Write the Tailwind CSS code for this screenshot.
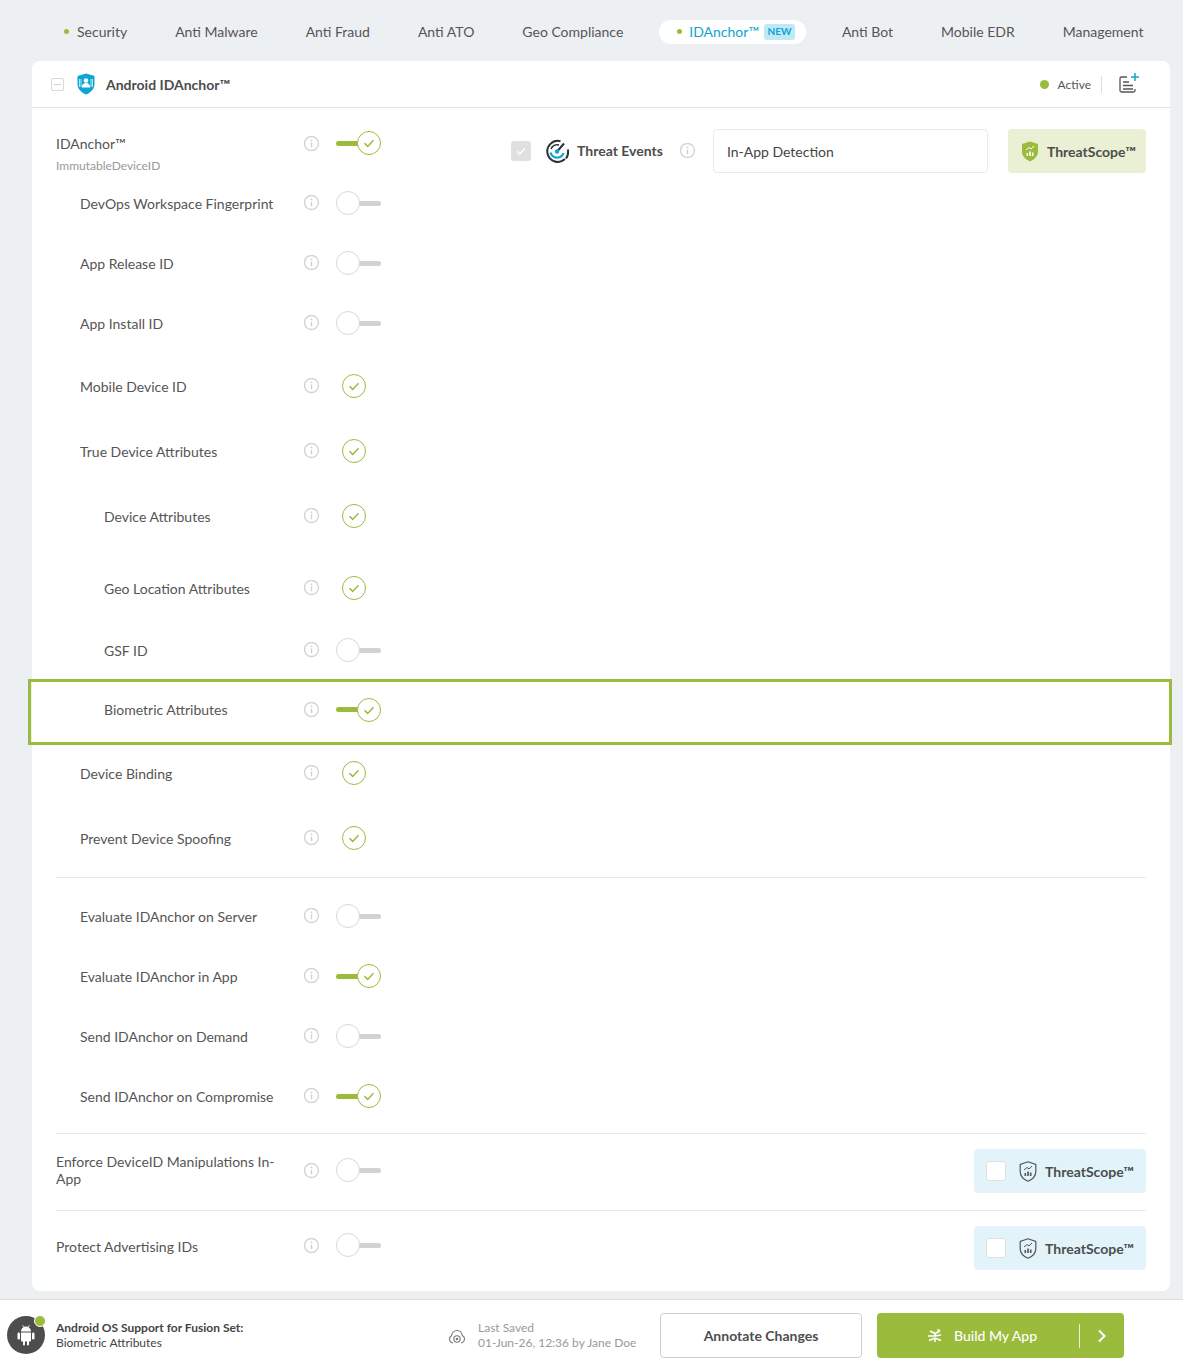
<!DOCTYPE html>
<html lang="en">
<head>
    <meta charset="UTF-8">
    <title>Android IDAnchor</title>
    <script src="https://cdn.jsdelivr.net/npm/@tailwindcss/browser@4"></script>
</head>
<body class="bg-[#edf0f3] font-['Lato',sans-serif] text-[14px] text-[#555]">
    <!-- shared icons -->
    <svg class="hidden">
        <symbol id="info" viewBox="0.5 0.5 16 16">
            <circle cx="8" cy="8" r="7" fill="none" stroke="#d4d4d4" stroke-width="1.4"/>
            <circle cx="8" cy="4.8" r="0.9" fill="#cfcfcf"/>
            <path d="M8 7v4.8" stroke="#cfcfcf" stroke-width="1.4" fill="none"/>
        </symbol>
        <symbol id="check" viewBox="0 0 24 24">
            <circle cx="12" cy="12" r="11.5" fill="#fff" stroke="#9bbb3c"/>
            <path d="M7.5 12.2l3.2 3.2 5.8-6.2" fill="none" stroke="#9bbb3c" stroke-width="1.5"/>
        </symbol>
        <symbol id="shield" viewBox="0 0 18 21">
            <path d="M9 .8l7.8 2.6v7c0 4.600-3.300 7.900-7.800 9.800C4.500 18.300 1.200 15 1.200 10.400v-7z" fill="none" stroke="#555" stroke-width="1.2"/>
            <path d="M5 9l3-2.500 2 1.500 3-3" fill="none" stroke="#555"/>
            <path d="M5.500 12h1.600v3H5.500zM8.200 10.500h1.600V15H8.200zM10.900 11.500h1.600V15h-1.600z" fill="#555"/>
        </symbol>
    </svg>

    <!-- tabs -->
    <nav class="h-[61px] pl-[64px] pt-[2px] flex items-center gap-6">
        <div class="flex items-center gap-[8px] pr-3"><span class="w-[5px] h-[5px] rounded-full bg-[#9bbb3c]"></span>Security</div>
        <div class="px-3">Anti Malware</div>
        <div class="px-3">Anti Fraud</div>
        <div class="px-3">Anti ATO</div>
        <div class="px-3">Geo Compliance</div>
        <div class="h-6 pl-[18px] pr-[11px] flex items-center rounded-full bg-white text-[#0ea5d3]">
            <span class="w-[5px] h-[5px] rounded-full bg-[#9bbb3c] mr-[7px]"></span>IDAnchor™
            <span class="ml-[5px] h-4 w-[31px] flex items-center justify-center rounded-[3px] bg-[#c0e9f5] text-[10px] font-bold">NEW</span>
        </div>
        <div class="px-3">Anti Bot</div>
        <div class="px-3">Mobile EDR</div>
        <div class="px-3">Management</div>
    </nav>

    <main class="ml-[32px] w-[1138px] h-[1230px] bg-white rounded-lg">
        <header class="h-[47px] border-b border-[#e2e2e2] flex items-center pl-[19px] pr-[30px]">
            <span class="w-[13px] h-[13px] border border-[#d8d8d8] rounded-[2px] flex items-center justify-center"><span class="w-[7px] h-px bg-[#cfcfcf]"></span></span>
            <svg class="w-[18px] h-[22px] ml-[13px]" viewBox="0 0 18 22">
                <path d="M9 .5l8.500 2.500v8c0 4.800-3.500 8.500-8.500 10.500C4 19.500.5 15.800.5 11V3z" fill="#0ea5d3"/>
                <circle cx="9" cy="7.500" r="2.300" fill="#fff"/>
                <path d="M4.800 14.500c0-3 1.800-4.500 4.200-4.500s4.200 1.500 4.200 4.500z" fill="#fff"/>
                <path d="M2.500 6v8M4 6v8M14 6v8M15.500 6v8" stroke="#fff" stroke-width=".7"/>
            </svg>
            <h1 class="ml-[11px] text-[14px] font-bold text-[#4d4d4d]">Android IDAnchor™</h1>
            <span class="ml-auto w-[9px] h-[9px] rounded-full bg-[#9bbb3c]"></span>
            <span class="ml-[9px] mt-[1px] text-[12px]">Active</span>
            <span class="ml-[10px] w-px h-[17px] bg-[#ddd]"></span>
            <svg class="ml-[16px] w-[22px] h-[22px] -mt-[3px]" viewBox="0 0 22 22">
                <path d="M9 5H3.500A1.500 1.500 0 0 0 2 6.500v12A1.500 1.500 0 0 0 3.500 20h12a1.500 1.500 0 0 0 1.500-1.500V17" fill="none" stroke="#555" stroke-width="1.300"/>
                <path d="M5 10h6M5 13.500h10M5 17h10" stroke="#555" stroke-width="1.300"/>
                <path d="M17 1v8M13 5h8" stroke="#0ea5d3" stroke-width="1.500"/>
            </svg>
        </header>

        <section class="px-6">
            <!-- first row has the threat events controls beside it -->
            <div class="h-[65px] flex items-start">
                <div class="w-[248px] pt-[27px] leading-[18px]">
                    <div>IDAnchor™</div>
                    <div class="mt-[4px] text-[12px] text-[#999]">ImmutableDeviceID</div>
                </div>
                <svg class="w-4 h-4 mt-[28px]"><use href="#info"/></svg>
                <div class="relative w-[45px] h-6 ml-4 mt-[23px] flex items-center">
                    <span class="w-6 h-[5px] rounded-full bg-[#9bbb3c]"></span>
                    <svg class="absolute right-0 top-0 w-6 h-6"><use href="#check"/></svg>
                </div>
                <div class="ml-[130px] mt-[21px] h-11 flex items-center flex-1">
                    <span class="w-5 h-5 rounded-[3px] bg-[#e0e0e0] flex items-center justify-center">
                        <svg class="w-3 h-3" viewBox="0 0 12 12"><path d="M2 6.200l2.800 2.800L10 3.500" fill="none" stroke="#fff" stroke-width="1.300"/></svg>
                    </span>
                    <svg class="w-6 h-6 ml-[14px]" viewBox="0 0 24 24">
                        <path d="M15.500 2.200A10.500 10.500 0 1 0 20 20" fill="none" stroke="#263238" stroke-width="2"/>
                        <path d="M22.800 10.500A11 11 0 0 1 21 19.500" fill="none" stroke="#263238" stroke-width="2"/>
                        <path d="M5.500 13.500a6.800 6.800 0 0 0 13 .5" fill="none" stroke="#0ea5d3" stroke-width="2.200"/>
                        <path d="M6 10a6.800 6.800 0 0 1 8-4" fill="none" stroke="#263238" stroke-width="1.600"/>
                        <path d="M19 4.500l-6.500 7.500" stroke="#263238" stroke-width="2"/>
                        <circle cx="12" cy="12.500" r="2.200" fill="#0ea5d3"/>
                    </svg>
                    <span class="ml-2 mb-[2px] font-bold text-[#4d4d4d]">Threat Events</span>
                    <svg class="w-4 h-4 ml-[17px]"><use href="#info"/></svg>
                    <div class="ml-[17px] w-[275px] h-11 border border-[#e6ecf2] rounded-[4px] flex items-center pl-[13px] text-[#444]">In-App Detection</div>
                    <div class="ml-5 w-[138px] h-11 rounded-[4px] bg-[#e9f0d3] flex items-center pl-[13px]">
                        <svg class="w-[18px] h-[21px]" viewBox="0 0 18 21">
                            <path d="M9 .5l8 2.500v7.500c0 4.500-3.300 7.800-8 10C4.300 18.300 1 15 1 10.500V3z" fill="#9bbb3c"/>
                            <path d="M5 9l3-2.500 2 1.500 3-3" fill="none" stroke="#fff"/>
                            <path d="M5.500 12h1.600v3H5.500zM8.200 10.500h1.600V15H8.200zM10.900 11.500h1.600V15h-1.600z" fill="#fff"/>
                        </svg>
                        <span class="ml-2 font-bold text-[#4d4d4d]">ThreatScope™</span>
                    </div>
                </div>
            </div>

            <div class="h-[60px] flex items-center">
                <div class="w-[248px] pl-6">DevOps Workspace Fingerprint</div>
                <svg class="w-4 h-4"><use href="#info"/></svg>
                <div class="relative w-[45px] h-6 ml-4 flex items-center justify-end"><span class="w-6 h-[5px] rounded-full bg-[#d2d2d2]"></span><span class="absolute left-0 top-0 w-6 h-6 rounded-full bg-white border border-[#d8d8d8]"></span></div>
            </div>
            <div class="h-[60px] flex items-center">
                <div class="w-[248px] pl-6">App Release ID</div>
                <svg class="w-4 h-4"><use href="#info"/></svg>
                <div class="relative w-[45px] h-6 ml-4 flex items-center justify-end"><span class="w-6 h-[5px] rounded-full bg-[#d2d2d2]"></span><span class="absolute left-0 top-0 w-6 h-6 rounded-full bg-white border border-[#d8d8d8]"></span></div>
            </div>
            <div class="h-[60px] flex items-center">
                <div class="w-[248px] pl-6">App Install ID</div>
                <svg class="w-4 h-4"><use href="#info"/></svg>
                <div class="relative w-[45px] h-6 ml-4 flex items-center justify-end"><span class="w-6 h-[5px] rounded-full bg-[#d2d2d2]"></span><span class="absolute left-0 top-0 w-6 h-6 rounded-full bg-white border border-[#d8d8d8]"></span></div>
            </div>
            <div class="h-[66px] flex items-center">
                <div class="w-[248px] pl-6">Mobile Device ID</div>
                <svg class="w-4 h-4"><use href="#info"/></svg>
                <svg class="w-6 h-6 ml-[22px]"><use href="#check"/></svg>
            </div>
            <div class="h-[64px] flex items-center">
                <div class="w-[248px] pl-6">True Device Attributes</div>
                <svg class="w-4 h-4"><use href="#info"/></svg>
                <svg class="w-6 h-6 ml-[22px]"><use href="#check"/></svg>
            </div>
            <div class="h-[66px] flex items-center">
                <div class="w-[248px] pl-12">Device Attributes</div>
                <svg class="w-4 h-4"><use href="#info"/></svg>
                <svg class="w-6 h-6 ml-[22px]"><use href="#check"/></svg>
            </div>
            <div class="h-[78px] flex items-center">
                <div class="w-[248px] pl-12">Geo Location Attributes</div>
                <svg class="w-4 h-4"><use href="#info"/></svg>
                <svg class="w-6 h-6 ml-[22px]"><use href="#check"/></svg>
            </div>
            <div class="h-[46px] flex items-center">
                <div class="w-[248px] pl-12">GSF ID</div>
                <svg class="w-4 h-4"><use href="#info"/></svg>
                <div class="relative w-[45px] h-6 ml-4 flex items-center justify-end"><span class="w-6 h-[5px] rounded-full bg-[#d2d2d2]"></span><span class="absolute left-0 top-0 w-6 h-6 rounded-full bg-white border border-[#d8d8d8]"></span></div>
            </div>

            <!-- highlighted row, its outline sticks out of the card -->
            <div class="h-[66px] mt-[6px] -ml-[28px] -mr-[26px] pl-[25px] pb-[5px] border-[3px] border-[#9bbb3c] flex items-center">
                <div class="w-[248px] pl-12">Biometric Attributes</div>
                <svg class="w-4 h-4"><use href="#info"/></svg>
                <div class="relative w-[45px] h-6 ml-4 flex items-center">
                    <span class="w-6 h-[5px] rounded-full bg-[#9bbb3c]"></span>
                    <svg class="absolute right-0 top-0 w-6 h-6"><use href="#check"/></svg>
                </div>
            </div>

            <div class="h-[56px] flex items-center">
                <div class="w-[248px] pl-6">Device Binding</div>
                <svg class="w-4 h-4"><use href="#info"/></svg>
                <svg class="w-6 h-6 ml-[22px]"><use href="#check"/></svg>
            </div>
            <div class="h-[74px] flex items-center">
                <div class="w-[248px] pl-6">Prevent Device Spoofing</div>
                <svg class="w-4 h-4"><use href="#info"/></svg>
                <svg class="w-6 h-6 ml-[22px]"><use href="#check"/></svg>
            </div>

            <div class="mt-[2px] pt-2 border-t border-[#e6e9ec]">
                <div class="h-[60px] flex items-center">
                    <div class="w-[248px] pl-6">Evaluate IDAnchor on Server</div>
                    <svg class="w-4 h-4"><use href="#info"/></svg>
                    <div class="relative w-[45px] h-6 ml-4 flex items-center justify-end"><span class="w-6 h-[5px] rounded-full bg-[#d2d2d2]"></span><span class="absolute left-0 top-0 w-6 h-6 rounded-full bg-white border border-[#d8d8d8]"></span></div>
                </div>
                <div class="h-[60px] flex items-center">
                    <div class="w-[248px] pl-6">Evaluate IDAnchor in App</div>
                    <svg class="w-4 h-4"><use href="#info"/></svg>
                    <div class="relative w-[45px] h-6 ml-4 flex items-center">
                        <span class="w-6 h-[5px] rounded-full bg-[#9bbb3c]"></span>
                        <svg class="absolute right-0 top-0 w-6 h-6"><use href="#check"/></svg>
                    </div>
                </div>
                <div class="h-[60px] flex items-center">
                    <div class="w-[248px] pl-6">Send IDAnchor on Demand</div>
                    <svg class="w-4 h-4"><use href="#info"/></svg>
                    <div class="relative w-[45px] h-6 ml-4 flex items-center justify-end"><span class="w-6 h-[5px] rounded-full bg-[#d2d2d2]"></span><span class="absolute left-0 top-0 w-6 h-6 rounded-full bg-white border border-[#d8d8d8]"></span></div>
                </div>
                <div class="h-[60px] flex items-center">
                    <div class="w-[248px] pl-6">Send IDAnchor on Compromise</div>
                    <svg class="w-4 h-4"><use href="#info"/></svg>
                    <div class="relative w-[45px] h-6 ml-4 flex items-center">
                        <span class="w-6 h-[5px] rounded-full bg-[#9bbb3c]"></span>
                        <svg class="absolute right-0 top-0 w-6 h-6"><use href="#check"/></svg>
                    </div>
                </div>
            </div>

            <div class="mt-[7px] h-[78px] pb-[2px] border-y border-[#e6e9ec] flex items-center">
                <div class="w-[248px] pr-[26px] -translate-y-px leading-[17px]">Enforce DeviceID Manipulations In-App</div>
                <svg class="w-4 h-4"><use href="#info"/></svg>
                <div class="relative w-[45px] h-6 ml-4 -translate-y-px flex items-center justify-end"><span class="w-6 h-[5px] rounded-full bg-[#d2d2d2]"></span><span class="absolute left-0 top-0 w-6 h-6 rounded-full bg-white border border-[#d8d8d8]"></span></div>
                <div class="ml-auto w-[172px] h-11 rounded-[4px] bg-[#e2f4fa] flex items-center pl-3">
                    <span class="w-5 h-5 rounded-[3px] bg-white border border-[#e0e0e0]"></span>
                    <svg class="w-[18px] h-[21px] ml-[13px]"><use href="#shield"/></svg>
                    <span class="ml-2 font-bold text-[#4d4d4d]">ThreatScope™</span>
                </div>
            </div>
            <div class="h-[74px] flex items-center">
                <div class="w-[248px] -translate-y-[2px]">Protect Advertising IDs</div>
                <svg class="w-4 h-4 -translate-y-[2px]"><use href="#info"/></svg>
                <div class="relative w-[45px] h-6 ml-4 -translate-y-[3px] flex items-center justify-end"><span class="w-6 h-[5px] rounded-full bg-[#d2d2d2]"></span><span class="absolute left-0 top-0 w-6 h-6 rounded-full bg-white border border-[#d8d8d8]"></span></div>
                <div class="ml-auto w-[172px] h-11 rounded-[4px] bg-[#e2f4fa] flex items-center pl-3">
                    <span class="w-5 h-5 rounded-[3px] bg-white border border-[#e0e0e0]"></span>
                    <svg class="w-[18px] h-[21px] ml-[13px]"><use href="#shield"/></svg>
                    <span class="ml-2 font-bold text-[#4d4d4d]">ThreatScope™</span>
                </div>
            </div>
        </section>
    </main>

    <footer class="mt-2 h-[60px] pt-3 bg-white border-t border-[#dcdcdc] flex items-center pl-[7px] text-[12px]">
        <div class="relative w-[38px] h-[38px] rounded-full bg-[#4d4d4d] flex items-center justify-center mt-[-1px]">
            <svg class="w-5 h-[22px]" viewBox="0 0 20 22" fill="#fff">
                <path d="M5 7.500a5 5 0 0 1 10 0z"/>
                <path d="M5 8.500h10v8a1 1 0 0 1-1 1h-1v3a1 1 0 0 1-2 0v-3H9v3a1 1 0 0 1-2 0v-3H6a1 1 0 0 1-1-1z"/>
                <rect x="1.500" y="8.500" width="2.500" height="7" rx="1.200"/>
                <rect x="16" y="8.500" width="2.500" height="7" rx="1.200"/>
                <path d="M6.500 1l1.500 2.500M13.500 1L12 3.500" stroke="#fff" stroke-width=".7"/>
            </svg>
            <span class="absolute right-[-1px] top-[-1px] w-3 h-3 rounded-full bg-[#9bbb3c] border border-white"></span>
        </div>
        <div class="ml-[11px] w-[392px] leading-[15px] -mt-[2px]">
            <div class="font-bold text-[#444]">Android OS Support for Fusion Set:</div>
            <div class="text-[#444]">Biometric Attributes</div>
        </div>
        <svg class="w-[18px] h-[18px]" viewBox="0 0 18 18" fill="none" stroke="#777" stroke-width="1.100">
            <path d="M5 16c-2.500-.5-3.500-2-3.500-4 0-1.500.8-2.500 2-3.200C3.800 6 6 3.500 9 3.500c2.800 0 5 2.300 5.300 5 1.500.7 2.200 1.900 2.200 3.300 0 2-1 3.600-3.500 4.200"/>
            <circle cx="9" cy="12" r="3.200"/>
            <circle cx="9" cy="12" r=".8"/>
        </svg>
        <div class="ml-3 w-[182px] leading-[15px] text-[#999] -mt-[2px]">
            <div>Last Saved</div>
            <div>01-Jun-26, 12:36 by Jane Doe</div>
        </div>
        <button class="w-[202px] h-[45px] border border-[#d0d0d0] rounded-[4px] bg-white text-[14px] font-bold text-[#4d4d4d]">Annotate Changes</button>
        <button class="ml-[15px] w-[247px] h-[45px] rounded-[4px] bg-[#9bbb3c] text-white text-[14px] font-medium flex items-center pl-[50px]">
            <svg class="w-4 h-4" viewBox="0 0 16 16" fill="none" stroke="#fff" stroke-width="1.600">
                <path d="M3 3l5 2.500L13 3M10.500 1.500L13 3M8 5.500V8M1 8h5l2 0 6-1M2 12.500L8 10l6 2.500M8 10v4"/>
            </svg>
            <span class="ml-[11px]">Build My App</span>
            <span class="ml-[42px] w-px h-6 bg-white/80"></span>
            <svg class="ml-[17px] w-[10px] h-[14px]" viewBox="0 0 10 14" fill="none" stroke="#fff" stroke-width="2"><path d="M2 1.500l5.500 5.500L2 12.500"/></svg>
        </button>
    </footer>
</body>
</html>
